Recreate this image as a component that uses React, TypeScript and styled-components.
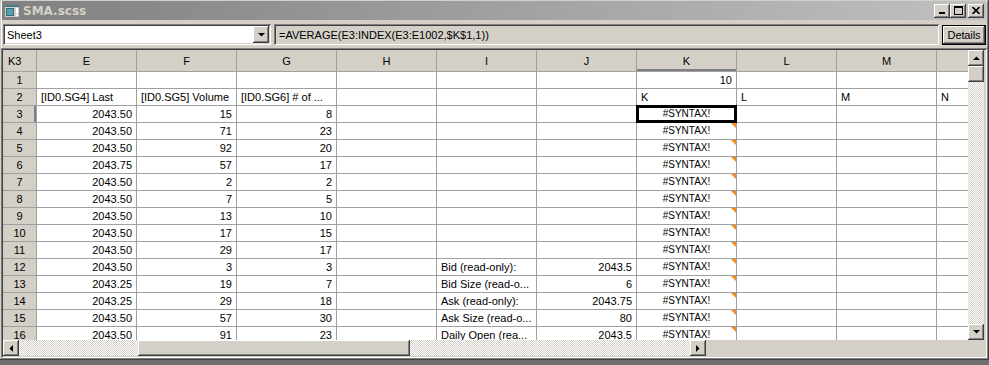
import React, { FC } from "react";
import styled, { createGlobalStyle, css } from "styled-components";

const GlobalStyle = createGlobalStyle`
  html, body {
    margin: 0;
    padding: 0;
    background: #6f6f6f;
  }
  body {
    font-family: "Liberation Sans", Arial, sans-serif;
    font-size: 11px;
    color: #000;
  }
`;

const raised = css`
  background: #d4d0c8;
  box-shadow: inset -1px -1px #404040, inset 1px 1px #ffffff,
    inset -2px -2px #808080, inset 2px 2px #d4d0c8;
`;

const sunken = css`
  box-shadow: inset 1px 1px #808080, inset -1px -1px #ffffff,
    inset 2px 2px #404040, inset -2px -2px #d4d0c8;
`;

const checker = css`
  background-color: #ffffff;
  background-image: repeating-conic-gradient(#d4d0c8 0 25%, #ffffff 0 50%);
  background-size: 2px 2px;
`;

const Window = styled.div`
  width: 989px;
  height: 360px;
  box-sizing: border-box;
  padding: 1px 2px 2px 1px;
  background: #d4d0c8;
  box-shadow: inset -1px -1px #404040, inset 1px 1px #d4d0c8,
    inset -2px -2px #808080, inset 2px 2px #ffffff;
  display: flex;
  flex-direction: column;
`;

const TitleBar = styled.div`
  height: 19px;
  margin: 0 1px;
  display: flex;
  align-items: center;
  gap: 3px;
  padding: 0 2px;
  background: linear-gradient(to right, #808080, #c0c0c0);
`;

const Title = styled.div`
  flex: 1;
  color: #d4d0c8;
  font-family: "DejaVu Sans", Tahoma, sans-serif;
  font-weight: bold;
  font-size: 12px;
`;

const TitleButtons = styled.div`
  display: flex;
  align-items: center;
`;

const TitleButton = styled.div<{ $gap?: boolean }>`
  ${raised};
  width: 16px;
  height: 14px;
  display: flex;
  align-items: center;
  justify-content: center;
  margin-left: ${(p) => (p.$gap ? "2px" : "0")};
`;

const Toolbar = styled.div`
  display: flex;
  align-items: center;
  gap: 3px;
  padding: 4px 0 2px 2px;
`;

const Combo = styled.div`
  ${sunken};
  width: 268px;
  height: 21px;
  box-sizing: border-box;
  background: #fff;
  display: flex;
  align-items: center;
  padding: 2px 2px 2px 4px;
`;

const ComboText = styled.div`
  flex: 1;
`;

const ComboButton = styled.div`
  ${raised};
  width: 16px;
  height: 17px;
  display: flex;
  align-items: center;
  justify-content: center;
`;

const Formula = styled.div`
  ${sunken};
  flex: 1;
  height: 21px;
  box-sizing: border-box;
  display: flex;
  align-items: center;
  padding: 0 5px;
`;

const DetailsButton = styled.div`
  width: 44px;
  height: 20px;
  box-sizing: border-box;
  display: flex;
  align-items: center;
  justify-content: center;
  background: #d4d0c8;
  border: 1px solid #000;
  box-shadow: inset -1px -1px #404040, inset 1px 1px #ffffff,
    inset -2px -2px #808080;
  margin-right: 1px;
  font-size: 11px;
  letter-spacing: -0.1px;
`;

const Frame = styled.div`
  ${sunken};
  margin-top: 1px;
  padding: 2px;
  display: flex;
  flex-direction: column;
`;

const Body = styled.div`
  display: flex;
  height: 290px;
`;

const Sheet = styled.div`
  width: 965px;
  height: 290px;
  overflow: hidden;
  display: grid;
  grid-template-columns: 34px repeat(10, 100px);
  grid-template-rows: 22px;
  grid-auto-rows: 17px;
  background: #fff;
`;

const HeadCell = styled.div<{ $active?: boolean; $left?: boolean }>`
  box-sizing: border-box;
  background: #d4d0c8;
  border-right: 1px solid #a0a0a0;
  border-bottom: 1px solid #a0a0a0;
  display: flex;
  align-items: center;
  justify-content: ${(p) => (p.$left ? "flex-start" : "center")};
  padding-left: ${(p) => (p.$left ? "5px" : "0")};
  box-shadow: ${(p) => (p.$active ? "inset 0 -2px #808080" : "none")};
`;

const RowHead = styled(HeadCell)`
  box-shadow: ${(p) => (p.$active ? "inset -2px 0 #808080" : "none")};
`;

const Cell = styled.div<{
  $align?: "left" | "right" | "center";
  $comment?: boolean;
  $selected?: boolean;
  $small?: boolean;
}>`
  position: relative;
  box-sizing: border-box;
  border-right: 1px solid #a0a0a0;
  border-bottom: 1px solid #a0a0a0;
  padding: 0 4px;
  line-height: 16px;
  white-space: nowrap;
  overflow: hidden;
  font-size: ${(p) => (p.$small ? "10px" : "11px")};
  text-align: ${(p) => p.$align || "left"};

  ${(p) =>
    p.$comment &&
    css`
      &::before {
        content: "";
        position: absolute;
        top: 0;
        right: 0;
        border-top: 5px solid #f08a1c;
        border-left: 5px solid transparent;
      }
    `}

  ${(p) =>
    p.$selected &&
    css`
      overflow: visible;
      &::after {
        content: "";
        position: absolute;
        left: -1px;
        top: -1px;
        right: -1px;
        bottom: -1px;
        border: 2px solid #000;
        box-shadow: 0 0 0 1px #000 inset;
      }
    `}
`;

const VScroll = styled.div`
  width: 17px;
  display: flex;
  flex-direction: column;
  background: #d4d0c8;
`;

const HScroll = styled.div`
  height: 16px;
  display: flex;
  background: #d4d0c8;
`;

const ArrowButton = styled.div`
  ${raised};
  width: 16px;
  height: 16px;
  flex: none;
  display: flex;
  align-items: center;
  justify-content: center;
`;

const Thumb = styled.div<{ $size: number; $vertical?: boolean }>`
  ${raised};
  flex: none;
  width: ${(p) => (p.$vertical ? "16px" : `${p.$size}px`)};
  height: ${(p) => (p.$vertical ? `${p.$size}px` : "16px")};
`;

const Track = styled.div<{ $size?: number }>`
  ${checker};
  flex: ${(p) => (p.$size ? "none" : "1")};
  width: ${(p) => (p.$size ? `${p.$size}px` : "auto")};
`;

const VTrack = styled.div`
  ${checker};
  flex: 1;
  width: 16px;
`;

const Corner = styled.div`
  flex: 1;
  background: #d4d0c8;
`;

const Tri: FC<{ dir: "up" | "down" | "left" | "right" }> = ({ dir }) => {
  const pts = {
    up: "0,4 7,4 3.5,0.5",
    down: "0,0 7,0 3.5,3.5",
    left: "4,0 4,7 0.5,3.5",
    right: "0,0 0,7 3.5,3.5",
  }[dir];
  const horiz = dir === "left" || dir === "right";
  return (
    <svg width={horiz ? 4 : 7} height={horiz ? 7 : 4} viewBox={horiz ? "0 0 4 7" : "0 0 7 4"}>
      <polygon points={pts} fill="#000" />
    </svg>
  );
};

const AppIcon: FC = () => (
  <svg width="16" height="14" viewBox="0 0 16 14">
    <rect x="0.5" y="0.5" width="15" height="13" fill="#d4d0c8" stroke="#808080" />
    <rect x="1" y="1" width="14" height="2" fill="#4a7a8c" />
    <rect x="2" y="4" width="8" height="8" fill="#2f6f7f" />
    <rect x="3" y="5" width="6" height="6" fill="#5aa0a8" />
    <rect x="12" y="4" width="2" height="5" fill="#fff" />
    <rect x="12" y="10" width="2" height="2" fill="#fff" />
  </svg>
);

const MinGlyph: FC = () => (
  <svg width="8" height="7" viewBox="0 0 8 7">
    <rect x="1" y="5" width="6" height="2" fill="#000" />
  </svg>
);

const MaxGlyph: FC = () => (
  <svg width="9" height="9" viewBox="0 0 9 9">
    <rect x="0.5" y="0.5" width="8" height="8" fill="none" stroke="#000" />
    <rect x="0" y="0" width="9" height="2" fill="#000" />
  </svg>
);

const CloseGlyph: FC = () => (
  <svg width="8" height="7" viewBox="0 0 8 7">
    <path d="M0.5 0 L7.5 7 M7.5 0 L0.5 7" stroke="#000" strokeWidth="1.6" />
  </svg>
);

// N is scrolled partly out of view, its header label sits past the scrollbar
const columns = ["E", "F", "G", "H", "I", "J", "K", "L", "M", "N"];
const hiddenLabel = "N";

interface RowData {
  e: string;
  f: string;
  g: string;
  i?: string;
  j?: string;
}

const data: RowData[] = [
  { e: "2043.50", f: "15", g: "8" },
  { e: "2043.50", f: "71", g: "23" },
  { e: "2043.50", f: "92", g: "20" },
  { e: "2043.75", f: "57", g: "17" },
  { e: "2043.50", f: "2", g: "2" },
  { e: "2043.50", f: "7", g: "5" },
  { e: "2043.50", f: "13", g: "10" },
  { e: "2043.50", f: "17", g: "15" },
  { e: "2043.50", f: "29", g: "17" },
  { e: "2043.50", f: "3", g: "3", i: "Bid (read-only):", j: "2043.5" },
  { e: "2043.25", f: "19", g: "7", i: "Bid Size (read-o...", j: "6" },
  { e: "2043.25", f: "29", g: "18", i: "Ask (read-only):", j: "2043.75" },
  { e: "2043.50", f: "57", g: "30", i: "Ask Size (read-o...", j: "80" },
  { e: "2043.50", f: "91", g: "23", i: "Daily Open (rea...", j: "2043.5" },
];

const App: FC = () => {
  return (
    <>
      <GlobalStyle />
      <Window>
        <TitleBar>
          <AppIcon />
          <Title>SMA.scss</Title>
          <TitleButtons>
            <TitleButton>
              <MinGlyph />
            </TitleButton>
            <TitleButton>
              <MaxGlyph />
            </TitleButton>
            <TitleButton $gap>
              <CloseGlyph />
            </TitleButton>
          </TitleButtons>
        </TitleBar>

        <Toolbar>
          <Combo>
            <ComboText>Sheet3</ComboText>
            <ComboButton>
              <Tri dir="down" />
            </ComboButton>
          </Combo>
          <Formula>=AVERAGE(E3:INDEX(E3:E1002,$K$1,1))</Formula>
          <DetailsButton>Details</DetailsButton>
        </Toolbar>

        <Frame>
          <Body>
            <Sheet>
              <HeadCell $left>K3</HeadCell>
              {columns.map((c) => (
                <HeadCell key={c} $active={c === "K"}>
                  {c === hiddenLabel ? "" : c}
                </HeadCell>
              ))}

              <RowHead>1</RowHead>
              {columns.map((c) => (
                <Cell key={c} $align="right">
                  {c === "K" ? "10" : ""}
                </Cell>
              ))}

              <RowHead>2</RowHead>
              <Cell>[ID0.SG4] Last</Cell>
              <Cell>[ID0.SG5] Volume</Cell>
              <Cell>[ID0.SG6] # of ...</Cell>
              <Cell />
              <Cell />
              <Cell />
              <Cell>K</Cell>
              <Cell>L</Cell>
              <Cell>M</Cell>
              <Cell>N</Cell>

              {data.map((r, idx) => {
                const n = idx + 3;
                return (
                  <React.Fragment key={n}>
                    <RowHead $active={n === 3}>{n}</RowHead>
                    <Cell $align="right">{r.e}</Cell>
                    <Cell $align="right">{r.f}</Cell>
                    <Cell $align="right">{r.g}</Cell>
                    <Cell />
                    <Cell>{r.i}</Cell>
                    <Cell $align="right">{r.j}</Cell>
                    <Cell $align="center" $small $selected={n === 3} $comment={n !== 3}>
                      #SYNTAX!
                    </Cell>
                    <Cell />
                    <Cell />
                    <Cell />
                  </React.Fragment>
                );
              })}
            </Sheet>
            <VScroll>
              <ArrowButton>
                <Tri dir="up" />
              </ArrowButton>
              <Thumb $vertical $size={16} />
              <VTrack />
              <ArrowButton>
                <Tri dir="down" />
              </ArrowButton>
            </VScroll>
          </Body>
          <HScroll>
            <ArrowButton>
              <Tri dir="left" />
            </ArrowButton>
            <Track $size={119} />
            <Thumb $size={272} />
            <Track />
            <ArrowButton>
              <Tri dir="right" />
            </ArrowButton>
            <Corner />
          </HScroll>
        </Frame>
      </Window>
    </>
  );
};

export default App;
